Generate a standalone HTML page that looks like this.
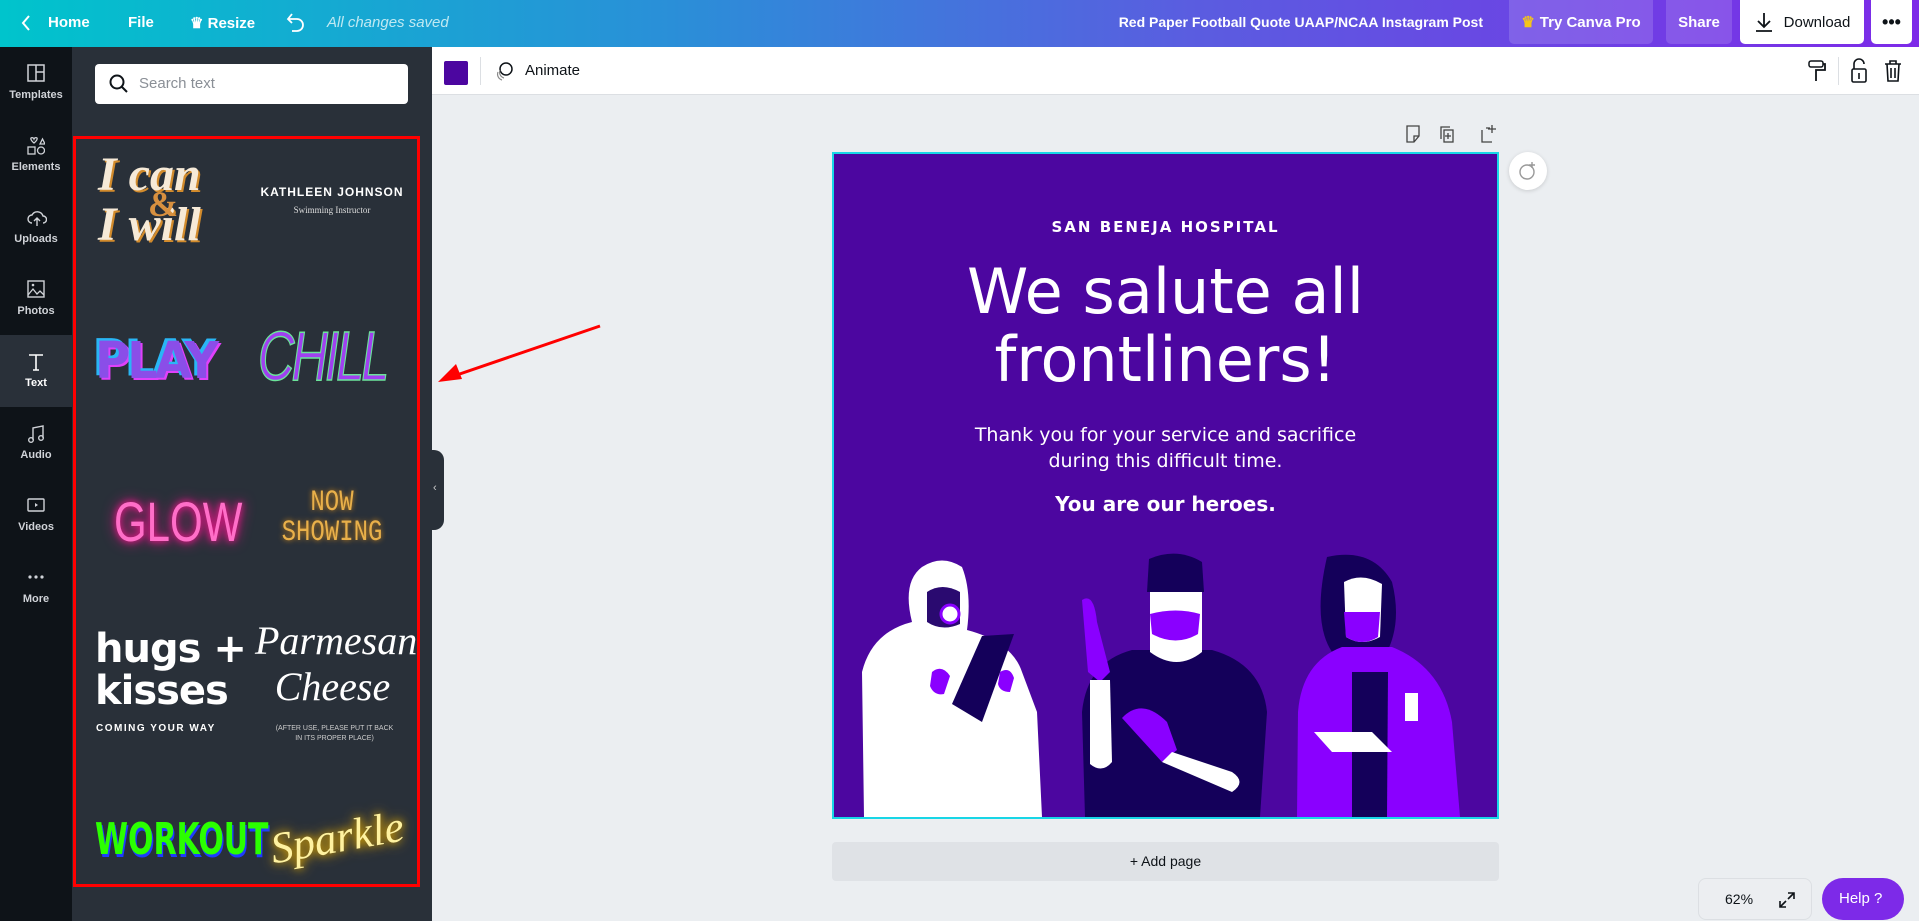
<!DOCTYPE html>
<html><head><meta charset="utf-8"><style>
*{box-sizing:border-box;margin:0;padding:0}
body{width:1919px;height:921px;overflow:hidden;font-family:"Liberation Sans",sans-serif;background:#ebeef1;position:relative}
.top{position:absolute;left:0;top:0;width:1919px;height:47px;background:linear-gradient(90deg,#00c4cc 0%,#2a8fd8 35%,#5a5de0 62%,#7d2ae8 100%);color:#fff;font-weight:bold;font-size:15px}
.top span{position:absolute;top:14px}
.btn{position:absolute;top:0;height:44px;border-radius:0 0 5px 5px;display:flex;align-items:center;justify-content:center;font-size:15px;font-weight:bold}
.rail{position:absolute;left:0;top:47px;width:72px;height:874px;background:#0e1318}
.ri{position:absolute;left:0;width:72px;height:72px;color:#d0d3d8;font-size:11px;font-weight:bold;text-align:center}
.ri svg{position:absolute;left:27px;top:17px}
.ri div{position:absolute;top:42px;width:100%}
.panel{position:absolute;left:72px;top:47px;width:360px;height:874px;background:#293039}
.search{position:absolute;left:23px;top:17px;width:313px;height:40px;background:#fff;border-radius:4px;color:#8a8f96;font-size:15px;padding:11px 0 0 44px}
.red{position:absolute;left:73px;top:136px;width:347px;height:751px;border:3px solid #f00}
.tb{position:absolute;left:432px;top:47px;width:1487px;height:48px;background:#fff;border-bottom:1px solid #dcdfe3}
.design{position:absolute;left:832px;top:152px;width:667px;height:667px;background:#4c06a0;border:2px solid #18d6e6;color:#fff;text-align:center;overflow:hidden;font-family:"DejaVu Sans","Liberation Sans",sans-serif}
.t{position:absolute;left:0;width:100%}
</style></head><body>
<div class="top">
<svg style="position:absolute;left:20px;top:14px" width="12" height="18"><path d="M9 2L3 9l6 7" stroke="#fff" stroke-width="2" fill="none"/></svg>
<span style="left:48px">Home</span><span style="left:128px">File</span>
<span style="left:190px">♛ Resize</span>
<svg style="position:absolute;left:286px;top:11px" width="20" height="22"><path d="M6 3L2 8l4 4M2 8h9a6 6 0 010 12H6" stroke="#fff" stroke-width="1.8" fill="none"/></svg>
<span style="left:327px;font-weight:normal;font-style:italic;color:#bfe9f2">All changes saved</span>
<span style="right:436px;font-size:14px">Red Paper Football Quote UAAP/NCAA Instagram Post</span>
<div class="btn" style="left:1509px;width:144px;background:rgba(255,255,255,.15)"><span style="position:static;color:#f5c518;margin-right:5px">♛</span>Try Canva Pro</div>
<div class="btn" style="left:1666px;width:66px;background:rgba(255,255,255,.15)">Share</div>
<div class="btn" style="left:1740px;width:124px;background:#fff;color:#0e1318;font-weight:normal"><svg width="20" height="22" style="margin-right:10px"><path d="M10 2v14M4 10l6 6 6-6M2 20h16" stroke="#0e1318" stroke-width="1.8" fill="none"/></svg>Download</div>
<div class="btn" style="left:1871px;width:41px;background:#fff;color:#0e1318;font-size:18px">•••</div>
</div>

<div class="rail">
<div class="ri" style="top:0"><svg width="18" height="18"><rect x="1" y="1" width="16" height="16" fill="none" stroke="#d0d3d8" stroke-width="1.5"/><path d="M9 1v16M9 8h8" stroke="#d0d3d8" stroke-width="1.5"/></svg><div>Templates</div></div>
<div class="ri" style="top:72px"><svg width="18" height="20"><path d="M4 2a2 2 0 013 1 2 2 0 013-1c1 2-3 5-3 5s-4-3-3-5zM13 8l2.5-5 2.5 5z" fill="none" stroke="#d0d3d8" stroke-width="1.3"/><rect x="1" y="11" width="7" height="7" fill="none" stroke="#d0d3d8" stroke-width="1.3"/><circle cx="14" cy="14.5" r="3.5" fill="none" stroke="#d0d3d8" stroke-width="1.3"/></svg><div>Elements</div></div>
<div class="ri" style="top:144px"><svg width="20" height="20"><path d="M5 15a4 4 0 010-8 6 6 0 0111 1 3.5 3.5 0 010 7M10 18v-8M7 13l3-3 3 3" fill="none" stroke="#d0d3d8" stroke-width="1.4"/></svg><div>Uploads</div></div>
<div class="ri" style="top:216px"><svg width="18" height="18"><rect x="1" y="1" width="16" height="16" fill="none" stroke="#d0d3d8" stroke-width="1.4"/><path d="M1 15l5-6 4 5 3-3 4 4" fill="none" stroke="#d0d3d8" stroke-width="1.3"/><circle cx="6" cy="5" r="1.3" fill="#d0d3d8"/></svg><div>Photos</div></div>
<div class="ri" style="top:288px;background:#293039;color:#fff;border-radius:0"><svg width="18" height="20"><path d="M2 3h14M9 3v15M6 18h6" stroke="#fff" stroke-width="1.6" fill="none"/></svg><div>Text</div></div>
<div class="ri" style="top:360px"><svg width="18" height="20"><path d="M6 16V4l10-2v12" stroke="#d0d3d8" stroke-width="1.4" fill="none"/><circle cx="4" cy="16" r="2.3" fill="none" stroke="#d0d3d8" stroke-width="1.4"/><circle cx="14" cy="14" r="2.3" fill="none" stroke="#d0d3d8" stroke-width="1.4"/></svg><div>Audio</div></div>
<div class="ri" style="top:432px"><svg width="18" height="18"><rect x="1" y="3" width="16" height="12" rx="1" fill="none" stroke="#d0d3d8" stroke-width="1.4"/><path d="M8 7l3 2-3 2z" fill="#d0d3d8"/></svg><div>Videos</div></div>
<div class="ri" style="top:504px"><svg width="18" height="18"><circle cx="3" cy="9" r="1.6" fill="#d0d3d8"/><circle cx="9" cy="9" r="1.6" fill="#d0d3d8"/><circle cx="15" cy="9" r="1.6" fill="#d0d3d8"/></svg><div>More</div></div>
</div>

<div class="panel">
<div class="search"><svg style="position:absolute;left:14px;top:10px" width="20" height="20"><circle cx="8" cy="8" r="6.5" fill="none" stroke="#0e1318" stroke-width="2"/><path d="M13 13l5 5" stroke="#0e1318" stroke-width="2"/></svg>Search text</div>
</div>

<div style="position:absolute;left:98px;top:150px;width:150px;font-family:'Liberation Serif',serif;font-style:italic;font-weight:bold;font-size:48px;line-height:50px;color:#f6ead8;text-shadow:2px 2px 0 #d28b2c">I can<br>I will</div>
<div style="position:absolute;left:148px;top:183px;font-family:'Liberation Serif',serif;font-weight:bold;font-size:36px;color:#d8903f">&amp;</div>
<div style="position:absolute;left:256px;top:185px;width:152px;text-align:center;color:#fff;font-weight:bold;font-size:12px;letter-spacing:1px">KATHLEEN JOHNSON</div>
<div style="position:absolute;left:256px;top:205px;width:152px;text-align:center;color:#ddd;font-family:'Liberation Serif',serif;font-size:9px">Swimming Instructor</div>

<div style="position:absolute;left:95px;top:335px;font-family:'DejaVu Sans',sans-serif;font-weight:bold;font-size:48px;line-height:52px;color:#8a4ee8;letter-spacing:-3px;transform:scaleY(1.05);text-shadow:-3px -2px 0 #29b6f6,2px 2px 0 #e040fb">PLAY</div>
<div style="position:absolute;left:258px;top:316px;font-family:'Liberation Sans',sans-serif;font-style:italic;font-size:70px;line-height:80px;color:#a040f0;letter-spacing:-4px;-webkit-text-stroke:1.5px #6be49a;transform:scaleX(.72);transform-origin:left">CHILL</div>

<div style="position:absolute;left:114px;top:492px;font-family:'Liberation Sans Narrow','Liberation Sans',sans-serif;font-size:56px;line-height:60px;color:#ff6ec8;transform:scaleX(.75);transform-origin:left;text-shadow:0 0 8px #ff1493,0 0 16px #ff1493">GLOW</div>
<div style="position:absolute;left:262px;top:488px;width:140px;text-align:center;font-family:'Liberation Mono',monospace;font-size:30px;line-height:30px;color:#e9b04a;transform:scaleX(.8);text-shadow:0 0 6px #d48a1a">NOW<br>SHOWING</div>

<div style="position:absolute;left:95px;top:628px;font-family:'DejaVu Sans',sans-serif;font-weight:bold;font-size:40px;line-height:42px;color:#fff;letter-spacing:-1px">hugs +<br>kisses</div>
<div style="position:absolute;left:96px;top:723px;color:#fff;font-weight:bold;font-size:10px;letter-spacing:1.5px">COMING YOUR WAY</div>
<div style="position:absolute;left:255px;top:618px;width:155px;text-align:center;font-family:'Liberation Serif',serif;font-style:italic;font-size:40px;line-height:46px;color:#fff">Parmesan<br>Cheese</div>
<div style="position:absolute;left:262px;top:724px;width:145px;text-align:center;color:#ccc;font-size:7px;line-height:10px">(AFTER USE, PLEASE PUT IT BACK<br>IN ITS PROPER PLACE)</div>

<div style="position:absolute;left:95px;top:814px;font-family:'DejaVu Sans',sans-serif;font-weight:bold;font-size:44px;line-height:52px;color:#2bff00;transform:scaleX(.68);transform-origin:left;text-shadow:2px 3px 0 #1d3cff">WORKOUT</div>
<div style="position:absolute;left:270px;top:812px;font-family:'Liberation Serif',serif;font-style:italic;font-size:44px;color:#fff2a0;transform:rotate(-10deg);text-shadow:0 0 8px #e0a800,0 0 14px #e0a800">Sparkle</div>

<div class="red"></div>
<svg style="position:absolute;left:430px;top:320px" width="180" height="70"><path d="M170 6L18 58" stroke="#f00" stroke-width="3"/><path d="M8 62l18-18 6 15z" fill="#f00"/></svg>

<div style="position:absolute;left:432px;top:450px;width:12px;height:80px;background:#293039;border-radius:0 10px 10px 0;color:#ccc;font-size:11px;padding-top:32px;padding-left:1px">‹</div>

<div class="tb">
<div style="position:absolute;left:12px;top:14px;width:24px;height:24px;background:#4c06a0;border-radius:2px"></div>
<div style="position:absolute;left:48px;top:10px;width:1px;height:28px;background:#dcdfe3"></div>
<svg style="position:absolute;left:62px;top:13px" width="22" height="22"><circle cx="12" cy="9" r="6" fill="none" stroke="#0e1318" stroke-width="1.5"/><path d="M6 10a6 6 0 004 8M4 12a6 6 0 004 8" stroke="#888" stroke-width="1.2" fill="none"/></svg>
<div style="position:absolute;left:93px;top:15px;font-size:15px;color:#0e1318">Animate</div>
<svg style="position:absolute;left:1375px;top:12px" width="20" height="24"><rect x="2" y="2" width="14" height="6" rx="2" fill="none" stroke="#0e1318" stroke-width="1.5"/><path d="M16 5h2v6h-9v4M9 15v7" stroke="#0e1318" stroke-width="1.8" fill="none"/></svg>
<div style="position:absolute;left:1406px;top:10px;width:1px;height:28px;background:#dcdfe3"></div>
<svg style="position:absolute;left:1418px;top:11px" width="18" height="26"><path d="M4 11V6a5 5 0 0110 0" fill="none" stroke="#0e1318" stroke-width="1.6"/><rect x="2" y="11" width="14" height="13" rx="1.5" fill="none" stroke="#0e1318" stroke-width="1.6"/><path d="M9 15v6" stroke="#0e1318" stroke-width="1.6"/></svg>
<svg style="position:absolute;left:1452px;top:12px" width="18" height="24"><path d="M1 5h16M6 5V2h6v3M3 5l1 17h10l1-17M7 9v10M11 9v10" fill="none" stroke="#0e1318" stroke-width="1.6"/></svg>
</div>

<svg style="position:absolute;left:1404px;top:124px" width="110" height="22"><path d="M3 2h12v10l-5 6H3z M10 18v-6h5" fill="none" stroke="#444" stroke-width="1.3"/><rect x="40" y="6" width="9" height="12" fill="none" stroke="#444" stroke-width="1.3"/><path d="M37 15V3h9M44 9v6M41 12h6" fill="none" stroke="#444" stroke-width="1.3"/><path d="M78 6v12h10M82 4h4M88 1v8M84 5h8" fill="none" stroke="#444" stroke-width="1.3"/></svg>
<div style="position:absolute;left:1509px;top:152px;width:38px;height:38px;border-radius:50%;background:#fff;box-shadow:0 1px 4px rgba(0,0,0,.15)"><svg width="38" height="38"><circle cx="18" cy="20" r="7" fill="none" stroke="#999" stroke-width="1.4"/><path d="M23 10v6M20 13h6" stroke="#999" stroke-width="1.4"/></svg></div>

<div class="design">
<div class="t" style="top:64px;font-weight:bold;font-size:15px;letter-spacing:2px">SAN BENEJA HOSPITAL</div>
<div class="t" style="top:104px;font-size:62px;line-height:68px">We salute all<br>frontliners!</div>
<div class="t" style="top:268px;font-size:19px;line-height:26px">Thank you for your service and sacrifice<br>during this difficult time.</div>
<div class="t" style="top:338px;font-weight:bold;font-size:20px">You are our heroes.</div>
<svg style="position:absolute;left:-2px;top:-2px" width="667" height="667">
<path d="M32 665 L30 520 Q40 480 80 470 Q70 430 90 415 Q110 402 130 415 Q140 440 135 478 Q180 490 190 520 L205 560 L210 665Z" fill="#fff"/>
<path d="M95 440 Q110 430 128 440 L128 472 Q110 480 95 470Z" fill="#2a0a70"/>
<circle cx="118" cy="462" r="9" fill="#fff" stroke="#8a00ff" stroke-width="3"/>
<path d="M120 552 L150 484 L182 482 L150 570 Z" fill="#14005a"/>
<path d="M100 520 q10-8 18 4 l-6 18 q-10 2-14-8z M168 520 q10-6 14 6 l-4 14 q-10 0-12-8z" fill="#8a00ff"/>
<path d="M253 665 L250 560 Q255 510 300 498 L380 498 Q430 512 435 560 L428 665Z" fill="#14005a"/>
<path d="M318 440 Q345 425 370 440 L370 500 Q345 520 318 500Z" fill="#fff"/>
<path d="M317 407 Q345 395 370 410 L372 440 L315 440Z" fill="#14005a"/>
<path d="M318 462 Q344 455 368 462 L366 482 Q344 495 320 482Z" fill="#8a00ff"/>
<path d="M250 448 Q262 440 265 470 L278 520 L268 530 L256 520Z" fill="#8a00ff"/>
<path d="M258 528 L278 528 L280 610 Q270 622 258 612Z" fill="#fff"/>
<path d="M290 566 Q310 545 335 570 L345 598 L330 610 Z" fill="#8a00ff"/>
<path d="M340 600 L400 620 Q415 630 400 640 L330 610Z" fill="#fff"/>
<path d="M495 405 Q540 395 560 430 Q570 470 555 500 L500 500 Q480 470 495 405Z" fill="#14005a"/>
<path d="M512 430 Q530 420 550 432 L548 485 Q530 495 514 485Z" fill="#fff"/>
<path d="M512 460 L548 460 L546 485 Q530 495 514 485Z" fill="#8a00ff"/>
<path d="M465 665 L466 560 Q470 510 510 495 L560 495 Q610 515 620 570 L628 665Z" fill="#8a00ff"/>
<path d="M520 520 L556 520 L555 665 L520 665Z" fill="#14005a"/>
<rect x="573" y="541" width="13" height="28" fill="#fff"/>
<path d="M482 580 L540 580 L560 600 L500 600Z" fill="#fff"/>
</svg>
</div>

<div style="position:absolute;left:832px;top:842px;width:667px;height:39px;background:#dfe2e6;border-radius:4px;text-align:center;font-size:14px;color:#0e1318;padding-top:11px">+ Add page</div>

<div style="position:absolute;left:1698px;top:878px;width:114px;height:42px;background:#eceef1;border:1px solid #dcdfe3;border-radius:8px;font-size:14px;color:#0e1318;padding:12px 0 0 26px">62%<svg style="position:absolute;left:80px;top:13px" width="16" height="16"><path d="M9 1h6v6M15 1l-6 6M7 15H1V9M1 15l6-6" stroke="#0e1318" stroke-width="1.6" fill="none"/></svg></div>
<div style="position:absolute;left:1822px;top:878px;width:82px;height:42px;background:#7d2ae8;border-radius:21px;color:#fff;font-size:15px;padding:12px 0 0 17px">Help ?</div>
</body></html>
